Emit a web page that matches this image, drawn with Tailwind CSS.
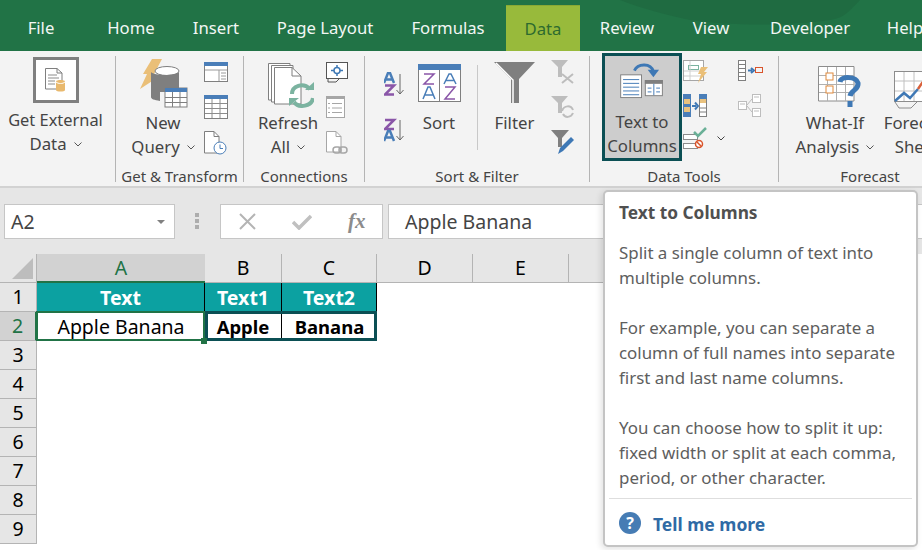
<!DOCTYPE html>
<html lang="en">
  <head>
    <meta charset="UTF-8" />
    <title>Text to Columns</title>
    <script src="https://cdn.jsdelivr.net/npm/@tailwindcss/browser@4"></script>
  </head>
  <body class="m-0 p-0 w-[922px] h-[550px] overflow-hidden relative bg-white font-['Noto_Sans',sans-serif] text-[#444]">
    <!-- tabs -->
    <div class="relative h-[51px] bg-[#217346] flex text-[16.700px] text-[#f2f7f4] overflow-hidden">
      <svg class="absolute left-0 top-0" width="922" height="51"><path d="M620 0 L860 0 C850 10 845 18 830 20 C790 26 730 26 690 20 C670 16 640 8 620 0Z" fill="#1f6b41"/></svg>
      <div class="relative shrink-0 w-[82px] text-center leading-[56px]">File</div>
      <div class="relative shrink-0 w-[98px] text-center leading-[56px]">Home</div>
      <div class="relative shrink-0 w-[72px] text-center leading-[56px]">Insert</div>
      <div class="relative shrink-0 w-[146px] text-center leading-[56px]">Page Layout</div>
      <div class="relative shrink-0 w-[100px] text-center leading-[56px]">Formulas</div>
      <div class="relative shrink-0 ml-[8px] mt-[5px] w-[74px] h-[46px] bg-[#98ba3b] border-t border-[#8aa834] text-center leading-[45px] text-[#2d6a2f]">Data</div>
      <div class="relative shrink-0 w-[94px] text-center leading-[56px]">Review</div>
      <div class="relative shrink-0 w-[74px] text-center leading-[56px]">View</div>
      <div class="relative shrink-0 w-[124px] text-center leading-[56px]">Developer</div>
      <div class="relative shrink-0 w-[66px] text-center leading-[56px]">Help</div>
    </div>

    <!-- ribbon -->
    <div class="h-[137px] bg-[#f3f3f3] border-b-2 border-[#d2d2d2] flex pt-[5px] overflow-hidden text-[16.800px] leading-[24px]">
      <!-- get external data -->
      <div class="shrink-0 w-[116px] h-[126px] border-r border-[#b4b4b4] flex flex-col items-center pr-[4px]">
        <div class="shrink-0 mt-[1px] w-[46px] h-[46px] border-[3px] border-[#7f7f7f] bg-white flex items-center justify-center">
          <svg width="24" height="26" viewBox="0 0 24 26" fill="none"><path d="M1.500 1.500H13L18 6V22H1.500Z" fill="#fff" stroke="#7f7f7f"/><path d="M13 1.500V6H18" stroke="#7f7f7f"/><path d="M4 8H13M4 11H15M4 14H11M4 17H11" stroke="#8c8c8c"/><path d="M12 14.500C12 12.500 21 12.500 21 14.500V23C21 25 12 25 12 23Z" fill="#e9b96e"/><path d="M12 15C14 17 19 17 21 15" stroke="#fff"/></svg>
        </div>
        <div class="mt-[5px] text-[16.400px]">Get External</div>
        <div class="flex items-center gap-[7px]">Data <svg width="8" height="5" viewBox="0 0 8 5" fill="none"><path d="M.5.5 4 4 7.500.5" stroke="#555"/></svg></div>
      </div>

      <!-- get & transform -->
      <div class="shrink-0 w-[128px] h-[126px] border-r border-[#b4b4b4] flex flex-col">
        <div class="flex shrink-0 h-[104px]">
          <div class="ml-[6px] w-[82px] flex flex-col items-center">
            <div class="h-[55px] flex items-end pb-[3px]">
              <svg width="50" height="50" viewBox="0 0 50 50"><path d="M14 1H24L15 18H22L2 31L9 16H5Z" fill="#eabf78"/><ellipse cx="29" cy="13" rx="12" ry="4.500" fill="#fff" stroke="#7f7f7f"/><path d="M13 14C16 18 37 18 41 14V34H22V43C16 42 13 41 13 39Z" fill="#7f7f7f"/><rect x="27" y="30" width="22" height="19" fill="#fff" stroke="#7f7f7f"/><rect x="27" y="30" width="22" height="4" fill="#4a7eb8"/><path d="M27 39.500H49M27 44.500H49M34.500 34V49M42 34V49" stroke="#7f7f7f"/></svg>
            </div>
            <div>New</div>
            <div class="flex items-center gap-[7px]">Query <svg width="8" height="5" viewBox="0 0 8 5" fill="none"><path d="M.5.5 4 4 7.500.5" stroke="#555"/></svg></div>
          </div>
          <div class="flex flex-col">
            <svg class="mt-[6px] block" width="24" height="20" viewBox="0 0 24 20"><rect x=".5" y=".5" width="23" height="19" fill="#fff" stroke="#7f7f7f"/><rect width="24" height="4" fill="#4a7eb8"/><path d="M1 8H23M15 8V19M17 11H22M17 14H22M17 17H22" stroke="#9a9a9a"/></svg>
            <svg class="mt-[13px] block" width="24" height="24" viewBox="0 0 24 24"><rect x=".5" y=".5" width="23" height="23" fill="#fff" stroke="#7f7f7f"/><rect width="24" height="4" fill="#4a7eb8"/><path d="M1 8.500H23M1 13.500H23M1 18.500H23M8 4V23M16 4V23" stroke="#8c8c8c"/></svg>
            <svg class="mt-[12px] block" width="24" height="24" viewBox="0 0 24 24" fill="none"><path d="M.5.5H10L15 5.500V22H.5Z" fill="#fff" stroke="#7f7f7f"/><path d="M10 .5V5.500H15" stroke="#7f7f7f"/><circle cx="16" cy="17" r="6" fill="#fff" stroke="#4a7eb8"/><path d="M16 13.500V17.500H19" stroke="#4a7eb8"/></svg>
          </div>
        </div>
        <div class="shrink-0 text-center text-[15px] leading-[20px] mt-[6px]">Get &amp; Transform</div>
      </div>

      <!-- connections -->
      <div class="shrink-0 w-[121px] h-[126px] border-r border-[#b4b4b4] flex flex-col">
        <div class="flex shrink-0 h-[104px]">
          <div class="ml-[6px] w-[76px] flex flex-col items-center">
            <div class="h-[55px] flex items-end pb-[3px] pl-[6px]">
              <svg width="46" height="46" viewBox="0 0 46 46" fill="none"><path d="M.5 1.500H22V38H.5Z" fill="#fff" stroke="#7f7f7f"/><path d="M3.500 3.500H25V40H3.500Z" fill="#fff" stroke="#7f7f7f"/><path d="M6.500 5.500H24L33 14V42H6.500Z" fill="#fff" stroke="#7f7f7f"/><path d="M24 5.500V14H33" stroke="#7f7f7f"/><path d="M24 32C24 24 35 20 42 27M45 36C44 44 31 47 26 40" stroke="#7bb3a0" stroke-width="4"/><path d="M37 28H46V20ZM21 36H31L21 44Z" fill="#7bb3a0"/></svg>
            </div>
            <div>Refresh</div>
            <div class="flex items-center gap-[7px]">All <svg width="8" height="5" viewBox="0 0 8 5" fill="none"><path d="M.5.5 4 4 7.500.5" stroke="#555"/></svg></div>
          </div>
          <div class="flex flex-col">
            <svg class="mt-[6px] block" width="23" height="21" viewBox="0 0 23 21" fill="none"><rect x=".5" y=".5" width="21" height="16" fill="#fff" stroke="#555"/><circle cx="11" cy="8.500" r="3" stroke="#3e78b5" stroke-width="1.500"/><path d="M11 3V6M11 11V14M5 8.500H8M14 8.500H17" stroke="#3e78b5" stroke-width="1.500"/><path d="M2 17V20H10L13 17" stroke="#555"/></svg>
            <svg class="mt-[13px] block" width="19" height="22" viewBox="0 0 19 22" fill="none"><rect x=".5" y=".5" width="18" height="21" fill="#fff" stroke="#a6a6a6"/><rect width="19" height="3" fill="#a6a6a6"/><path d="M6 7.500H16M6 12H16M6 16.500H16M2 7.500H4M2 12H4M2 16.500H4" stroke="#a6a6a6"/></svg>
            <svg class="mt-[13px] block" width="22" height="24" viewBox="0 0 22 24" fill="none"><path d="M.5.5H10L15 5.500V21H.5Z" fill="#fff" stroke="#a6a6a6"/><path d="M10 .5V5.500H15" stroke="#a6a6a6"/><rect x="7" y="16" width="8" height="6" rx="3" stroke="#a6a6a6" stroke-width="1.500"/><rect x="13" y="16" width="8" height="6" rx="3" stroke="#a6a6a6" stroke-width="1.500"/></svg>
          </div>
        </div>
        <div class="shrink-0 text-center text-[15px] leading-[20px] mt-[6px]">Connections</div>
      </div>

      <!-- sort & filter -->
      <div class="shrink-0 w-[225px] h-[126px] border-r border-[#b4b4b4] flex flex-col">
        <div class="flex shrink-0 h-[104px]">
          <div class="ml-[19px] w-[20px] flex flex-col">
            <svg class="mt-[16px] block" width="20" height="24" viewBox="0 0 20 24"><path d="M16 2V22M12.500 18 16 22 19.500 18" fill="none" stroke="#666"/><path d="M0 11 4 1H6L10 11M2 7.500H8" fill="none" stroke="#4a7eb8" stroke-width="2.500"/><path d="M1 13.500H10L1 22.500H10" fill="none" stroke="#8a56a8" stroke-width="2.500"/></svg>
            <svg class="mt-[22px] block" width="20" height="24" viewBox="0 0 20 24"><path d="M16 2V22M12.500 18 16 22 19.500 18" fill="none" stroke="#666"/><path d="M1 2H10L1 11H10" fill="none" stroke="#8a56a8" stroke-width="2.500"/><path d="M0 23 4 13H6L10 23M2 19.500H8" fill="none" stroke="#4a7eb8" stroke-width="2.500"/></svg>
          </div>
          <div class="ml-[8px] w-[54px] flex flex-col items-center">
            <div class="h-[55px] flex items-end pb-[9px]">
              <svg width="43" height="38" viewBox="0 0 43 38" fill="none"><rect x=".5" y=".5" width="42" height="37" fill="#fff" stroke="#7f7f7f"/><rect width="43" height="6" fill="#4a7eb8"/><path d="M21.500 6V38" stroke="#7f7f7f"/><path d="M6 10H16L6 20H16" stroke="#8a56a8" stroke-width="1.500"/><path d="M5 35 10 23H12L17 35M7 31H15" stroke="#4a7eb8" stroke-width="1.500"/><path d="M26 20 31 10H33L38 20M28 16.500H36" stroke="#4a7eb8" stroke-width="1.500"/><path d="M27 23H37L27 35H37" stroke="#8a56a8" stroke-width="1.500"/></svg>
            </div>
            <div>Sort</div>
          </div>
          <div class="ml-[11px] mt-[9px] w-px h-[85px] bg-[#c8c8c8]"></div>
          <div class="w-[73px] flex flex-col items-center">
            <div class="h-[55px] flex items-end pb-[7px]">
              <svg width="41" height="42" viewBox="0 0 41 42"><path d="M0 0H41L25 17V41H17V17Z" fill="#7f7f7f"/><path d="M2 1 19 18V41" fill="none" stroke="#fff" stroke-width="1.500"/></svg>
            </div>
            <div>Filter</div>
          </div>
          <div class="flex flex-col">
            <svg class="mt-[4px] block" width="24" height="24" viewBox="0 0 24 24"><path d="M0 0H17L11 7V17H7V7Z" fill="#bdbdbd"/><path d="M11 14 22 23M22 14 11 23" stroke="#bdbdbd" stroke-width="2"/></svg>
            <svg class="mt-[12px] block" width="24" height="23" viewBox="0 0 24 23" fill="none"><path d="M0 0H17L11 7V17H7V7Z" fill="#bdbdbd"/><path d="M11 15C13 9 20 9 22 14M22 17C20 22 14 22 12 18" stroke="#bdbdbd" stroke-width="2"/></svg>
            <svg class="mt-[11px] block" width="24" height="24" viewBox="0 0 24 24"><path d="M0 0H18L11 8V17H7V8Z" fill="#7f7f7f"/><path d="M7 24 9 18 20 7 23 10 12 21Z" fill="#3e78b5"/></svg>
          </div>
        </div>
        <div class="shrink-0 text-center text-[15px] leading-[20px] mt-[6px]">Sort &amp; Filter</div>
      </div>

      <!-- data tools -->
      <div class="shrink-0 w-[189px] h-[126px] border-r border-[#b4b4b4] flex flex-col">
        <div class="flex shrink-0 h-[104px]">
          <div class="ml-[12px] -mt-[3px] w-[80px] h-[108px] border-[3px] border-[#0b4f54] bg-[#cdcdcd] flex flex-col items-center shrink-0">
            <svg class="mt-[7px] block" width="46" height="38" viewBox="0 0 46 38" fill="none"><rect x=".5" y="12.500" width="22" height="24" fill="#fff" stroke="#7f7f7f"/><path d="M3 17.500H20M3 21.500H20M3 25.500H20M3 29.500H20M3 33.500H20" stroke="#3e78b5"/><rect x="26.500" y="18.500" width="18" height="16" fill="#fff" stroke="#7f7f7f"/><rect x="26" y="18" width="19" height="4" fill="#7f7f7f"/><path d="M35.500 22V34M29 26.500H33M38 26.500H42M29 30.500H33M38 30.500H42" stroke="#3e78b5"/><path d="M15 8C18 1 32 -1 35 9" stroke="#3e78b5" stroke-width="3"/><path d="M29 7H41L35 15Z" fill="#3e78b5"/></svg>
            <div class="mt-[11px] leading-[24px]">Text to</div>
            <div class="leading-[24px]">Columns</div>
          </div>
          <div class="ml-px w-[55px] flex flex-col shrink-0">
            <svg class="mt-[4px] block" width="25" height="23" viewBox="0 0 25 23" fill="none"><rect x=".5" y=".5" width="20" height="20" fill="#fff" stroke="#a6a6a6"/><rect x="5.500" y="5.500" width="10" height="4" stroke="#7bb3a0"/><path d="M1 11H20M1 16H20M7 1V20" stroke="#cfcfcf"/><path d="M18 7H25L21 12H24L15 23L18 14H15Z" fill="#eabf78"/></svg>
            <svg class="mt-[11px] block" width="24" height="23" viewBox="0 0 24 23"><rect width="8" height="23" fill="#4a7eb8"/><rect x="1" y="5" width="6" height="5" fill="#e9c27e"/><rect x="1" y="13" width="6" height="5" fill="#e9c27e"/><rect x="16.500" y=".5" width="7" height="22" fill="#fff" stroke="#7f7f7f"/><rect x="16" width="8" height="5" fill="#4a7eb8"/><rect x="17" y="5" width="6" height="4" fill="#e9c27e"/><path d="M17 14H23M17 18H23" stroke="#7f7f7f"/><path d="M9 12H13M12 8.500 15 12 12 15.500" fill="none" stroke="#3e78b5" stroke-width="2"/></svg>
            <div class="mt-[10px] flex items-center">
              <svg class="block" width="24" height="23" viewBox="0 0 24 23" fill="none"><rect x=".5" y="7.500" width="14" height="5" fill="#fff" stroke="#8c8c8c"/><rect x=".5" y="16.500" width="14" height="5" fill="#fff" stroke="#8c8c8c"/><path d="M11 5 15 9 23 1" stroke="#6ab097" stroke-width="2.500"/><circle cx="16" cy="17" r="3.500" fill="#fff" stroke="#d9542b" stroke-width="1.500"/><path d="M13.500 14.500 18.500 19.500" stroke="#d9542b" stroke-width="1.500"/></svg>
              <svg class="ml-[10px] block" width="8" height="5" viewBox="0 0 8 5" fill="none"><path d="M.5.5 4 4 7.500.5" stroke="#444"/></svg>
            </div>
          </div>
          <div class="flex flex-col">
            <svg class="mt-[4px] block" width="25" height="21" viewBox="0 0 25 21" fill="none"><rect x=".5" y=".5" width="7" height="20" fill="#fff" stroke="#7f7f7f"/><path d="M1 4.500H8M1 8.500H8M1 12.500H8M1 16.500H8" stroke="#7f7f7f"/><path d="M10 10.500H14M13 8 16 10.500 13 13" stroke="#3e78b5" stroke-width="2"/><rect x="17.500" y="7.500" width="7" height="5" stroke="#d9542b"/></svg>
            <svg class="mt-[13px] block" width="23" height="23" viewBox="0 0 23 23" fill="none"><rect x="0.500" y="7.500" width="8" height="8" fill="#fff" stroke="#bdbdbd"/><rect x="14.500" y=".5" width="8" height="8" fill="#fff" stroke="#bdbdbd"/><rect x="14.500" y="14.500" width="8" height="8" fill="#fff" stroke="#bdbdbd"/><path d="M9 11 14 5M9 12 14 18" stroke="#bdbdbd"/><path d="M2 10H7M16 3H21M16 17H21" stroke="#bdbdbd"/></svg>
          </div>
        </div>
        <div class="shrink-0 text-center text-[15px] leading-[20px] mt-[6px]">Data Tools</div>
      </div>

      <!-- forecast -->
      <div class="shrink-0 w-[182px] h-[126px] flex flex-col">
        <div class="flex shrink-0 h-[104px]">
          <div class="ml-[11px] w-[90px] flex flex-col items-center shrink-0">
            <div class="h-[55px] flex items-end pb-[3px] pl-[9px]">
              <svg width="43" height="42" viewBox="0 0 43 42" fill="none"><path d="M.5.5H36V35H.5Z" fill="#fff" stroke="#8c8c8c"/><path d="M9.500 1V35M18.500 1V35M27.500 1V35M1 9.500H36M1 18.500H36M1 26.500H36" stroke="#b0b0b0"/><rect x="8" y="7" width="7" height="7" fill="#fff" stroke="#e08a3c"/><rect x="8" y="20" width="7" height="7" fill="#fff" stroke="#e08a3c"/><path d="M22 16C23 10 38 10 40 17C41 24 33 24 32 30" stroke="#3e78b5" stroke-width="5"/><rect x="29.500" y="35" width="5" height="6" fill="#3e78b5"/></svg>
            </div>
            <div>What-If</div>
            <div class="flex items-center gap-[7px]">Analysis <svg width="8" height="5" viewBox="0 0 8 5" fill="none"><path d="M.5.5 4 4 7.500.5" stroke="#555"/></svg></div>
          </div>
          <div class="w-[74px] flex flex-col items-center shrink-0">
            <div class="h-[55px] flex items-end pb-[2px] self-start pl-[14px]">
              <svg class="shrink-0" width="50" height="38" viewBox="0 0 50 38" fill="none"><rect x=".5" y=".5" width="48" height="30" fill="#fff" stroke="#8c8c8c"/><path d="M10 1V30M20 1V30M30 1V30M1 10H48M1 20H48" stroke="#c0c0c0"/><path d="M1 30 10 22 16 27 24 18" stroke="#3e78b5" stroke-width="2.500"/><path d="M24 18 28 12 36 16 48 8" stroke="#d9603a" stroke-width="2.500"/><path d="M1 31 5 37H17L23 31" stroke="#8c8c8c"/></svg>
            </div>
            <div>Forecast</div>
            <div>Sheet</div>
          </div>
        </div>
        <div class="shrink-0 text-center text-[15px] leading-[20px] mt-[6px]">Forecast</div>
      </div>
    </div>

    <!-- formula bar -->
    <div class="h-[66px] bg-[#e6e6e6] flex pt-[16px] text-[19.500px]">
      <div class="shrink-0 ml-[4px] w-[171px] h-[35px] bg-white border border-[#c6c6c6] flex items-center justify-between pl-[6px] pr-[9px]">
        <span>A2</span>
        <svg width="8" height="4" viewBox="0 0 8 4"><path d="M0 0H8L4 4Z" fill="#808080"/></svg>
      </div>
      <div class="shrink-0 ml-[20px] mt-[9px] flex flex-col gap-[2px] w-[4px] h-[16px]">
        <div class="shrink-0 w-[4px] h-[4px] bg-[#adadad]"></div>
        <div class="shrink-0 w-[4px] h-[4px] bg-[#adadad]"></div>
        <div class="shrink-0 w-[4px] h-[4px] bg-[#adadad]"></div>
      </div>
      <div class="shrink-0 ml-[21px] w-[163px] h-[35px] bg-white border border-[#c6c6c6] flex items-center">
        <svg class="ml-[18px]" width="17" height="17" viewBox="0 0 17 17"><path d="M1 1 16 16M16 1 1 16" stroke="#b4b4b4" stroke-width="2"/></svg>
        <svg class="ml-[36px]" width="20" height="16" viewBox="0 0 20 16"><path d="M1 8 7 14 19 2" fill="none" stroke="#c0c0c0" stroke-width="3.500"/></svg>
        <span class="ml-[36px] font-['Liberation_Serif',serif] italic text-[21px] text-[#8c8c8c] font-bold">fx</span>
      </div>
      <div class="shrink-0 ml-[5px] w-[540px] h-[35px] bg-white border border-[#c6c6c6] flex items-center pl-[16px]">Apple Banana</div>
    </div>

    <!-- sheet -->
    <div class="grid grid-cols-[37px_168px_77px_95px_96px_96px_96px_96px_96px] grid-rows-[29px_29px_29px_29px_29px_29px_29px_29px_29px_29px] text-[19.500px] text-black">
      <div class="bg-[#e6e6e6] border-r border-b border-[#b4b4b4] flex items-end justify-end pr-[3px] pb-[3px]">
        <svg width="21" height="21" viewBox="0 0 21 21"><path d="M21 0V21H0Z" fill="#bdbdbd"/></svg>
      </div>
      <div class="bg-[#d2d2d2] border-b-2 border-[#217346] text-[#217346] flex items-center justify-center">A</div>
      <div class="bg-[#e6e6e6] border-r border-b border-[#b4b4b4] flex items-center justify-center">B</div>
      <div class="bg-[#e6e6e6] border-r border-b border-[#b4b4b4] flex items-center justify-center">C</div>
      <div class="bg-[#e6e6e6] border-r border-b border-[#b4b4b4] flex items-center justify-center">D</div>
      <div class="bg-[#e6e6e6] border-r border-b border-[#b4b4b4] flex items-center justify-center">E</div>
      <div class="bg-[#e6e6e6] border-r border-b border-[#b4b4b4]"></div>
      <div class="bg-[#e6e6e6] border-r border-b border-[#b4b4b4]"></div>
      <div class="bg-[#e6e6e6] border-b border-[#b4b4b4]"></div>

      <div class="bg-[#e6e6e6] border-r border-b border-[#b4b4b4] flex items-center justify-center">1</div>
      <div class="h-[28px] bg-[#0ca1a1] border-r border-black font-bold text-white flex items-center justify-center pt-[1px]">Text</div>
      <div class="h-[28px] bg-[#0ca1a1] border-r border-black font-bold text-white flex items-center justify-center pt-[1px]">Text1</div>
      <div class="h-[28px] bg-[#0ca1a1] border-r border-black font-bold text-white flex items-center justify-center pt-[1px]">Text2</div>
      <div class="col-span-5"></div>

      <div class="bg-[#d2d2d2] border-r-2 border-b border-r-[#217346] border-b-[#b4b4b4] text-[#217346] flex items-center justify-center">2</div>
      <div class="relative z-10 flex items-center justify-center">Apple Banana
        <div class="absolute -left-[1px] -top-[1px] right-0 bottom-0 border-2 border-[#217346]"></div>
        <div class="absolute -right-[2px] -bottom-[3px] w-[6px] h-[6px] bg-[#217346]"></div>
      </div>
      <div class="relative col-span-2 flex font-bold text-[18.500px]">
        <div class="w-[77px] border-r border-black flex items-center justify-center">Apple</div>
        <div class="flex-1 flex items-center justify-center">Banana</div>
        <div class="absolute left-0 right-0 -top-[1px] bottom-0 border-[3px] border-[#0b4f54]"></div>
      </div>
      <div class="col-span-5"></div>

      <div class="bg-[#e6e6e6] border-r border-b border-[#b4b4b4] flex items-center justify-center">3</div><div class="col-span-8"></div>
      <div class="bg-[#e6e6e6] border-r border-b border-[#b4b4b4] flex items-center justify-center">4</div><div class="col-span-8"></div>
      <div class="bg-[#e6e6e6] border-r border-b border-[#b4b4b4] flex items-center justify-center">5</div><div class="col-span-8"></div>
      <div class="bg-[#e6e6e6] border-r border-b border-[#b4b4b4] flex items-center justify-center">6</div><div class="col-span-8"></div>
      <div class="bg-[#e6e6e6] border-r border-b border-[#b4b4b4] flex items-center justify-center">7</div><div class="col-span-8"></div>
      <div class="bg-[#e6e6e6] border-r border-b border-[#b4b4b4] flex items-center justify-center">8</div><div class="col-span-8"></div>
      <div class="bg-[#e6e6e6] border-r border-b border-[#b4b4b4] flex items-center justify-center">9</div><div class="col-span-8"></div>
      <div class="bg-[#e6e6e6] border-r border-[#b4b4b4]"></div><div class="col-span-8"></div>
    </div>

    <!-- tooltip -->
    <div class="absolute z-20 left-[603px] top-[190px] w-[315px] h-[357px] bg-white border-2 border-[#c4c4c4] rounded-[5px] shadow-[-2px_2px_6px_rgba(0,0,0,0.12)] text-[16.900px] leading-[25px] text-[#5e5e5e] flex flex-col">
      <div class="mt-[8px] ml-[14px] text-[17.300px] font-bold text-[#505050]">Text to Columns</div>
      <div class="mt-[15px] ml-[14px]">Split a single column of text into<br />multiple columns.</div>
      <div class="mt-[25px] ml-[14px]">For example, you can separate a<br />column of full names into separate<br />first and last name columns.</div>
      <div class="mt-[25px] ml-[14px]">You can choose how to split it up:<br />fixed width or split at each comma,<br />period, or other character.</div>
      <div class="mt-[8px] mx-[4px] flex-1 border-t border-[#dedede] flex items-center pl-[10px] pt-[1px]">
        <svg width="22" height="22" viewBox="0 0 22 22"><circle cx="11" cy="11" r="11" fill="#467cb4"/><text x="11" y="17" text-anchor="middle" font-family="Noto Sans" font-weight="700" font-size="16" fill="#fff">?</text></svg>
        <span class="ml-[12px] mt-[4px] text-[17.500px] font-bold text-[#2f6aa5]">Tell me more</span>
      </div>
    </div>
  </body>
</html>
